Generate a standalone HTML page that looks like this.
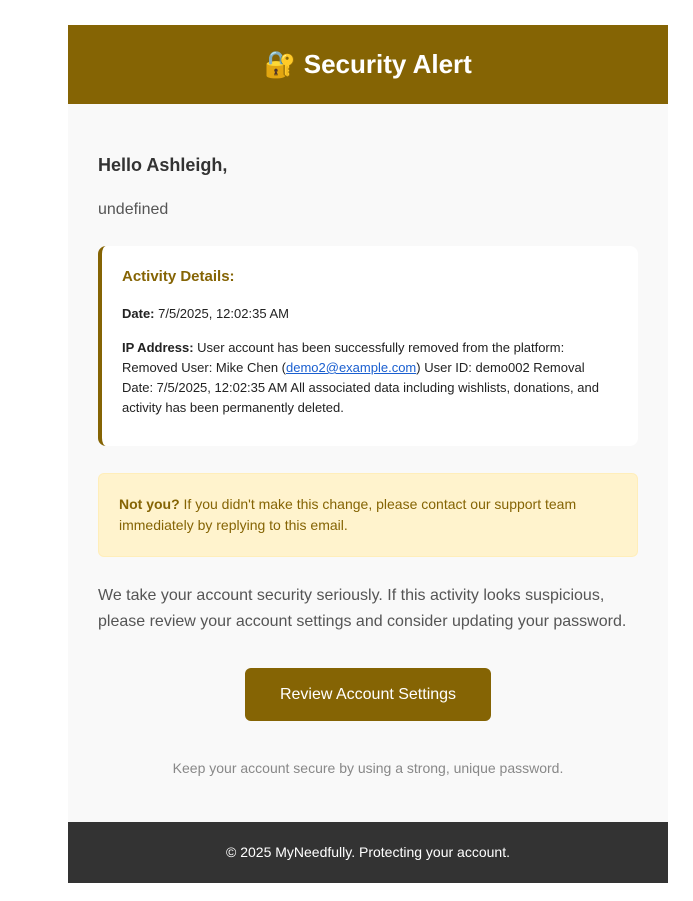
<!DOCTYPE html>
<html><head><meta charset="utf-8"><style>
body{margin:0;background:#fff;font-family:"Liberation Sans",Arial,sans-serif;}
.wrap{position:absolute;left:68px;top:25px;width:600px;background:#f9f9f9;}
.hdr{height:79px;background:#856404;color:#fff;font-size:26px;font-weight:bold;text-align:center;line-height:79px;}
.body{padding:0 30px;position:relative;height:718px;}
.abs{position:absolute;}
h2{margin:0;font-size:18px;color:#333;position:absolute;left:30px;top:51px;}
.und{left:30px;top:97px;font-size:16px;color:#555;}
.act{left:30px;top:142px;height:200px;background:#fff;border-left:4px solid #856404;border-radius:8px;padding:0 20px;box-sizing:border-box;width:540px;}
.act .t{position:absolute;left:20px;top:22px;font-size:15px;font-weight:bold;color:#856404;}
.act .d{position:absolute;left:20px;top:60px;font-size:13px;color:#222;}
.act .ip{position:absolute;left:20px;top:92px;width:482px;font-size:13px;line-height:20px;color:#222;}
a{color:#1a5fd0;}
.warn{left:30px;top:369px;width:540px;height:84px;box-sizing:border-box;background:#fff3cd;border:1px solid #ffeeba;border-radius:6px;padding:20px 20px;font-size:14px;line-height:21px;color:#856404;}
.p{left:30px;top:479px;width:545px;font-size:16px;line-height:26px;color:#555;}
.btn{left:177px;top:564px;width:246px;height:53px;background:#856404;border-radius:6px;color:#fff;font-size:16px;text-align:center;line-height:53px;}
.note{left:0;width:600px;top:656px;text-align:center;font-size:14px;color:#888;}
.ftr{height:61px;background:#333;color:#fff;font-size:14px;text-align:center;line-height:61px;}
</style></head><body>
<div class="wrap">
<div class="hdr">🔐 Security Alert</div>
<div class="body">
<h2>Hello Ashleigh,</h2>
<div class="abs und">undefined</div>
<div class="abs act">
<div class="t">Activity Details:</div>
<div class="d"><b>Date:</b> 7/5/2025, 12:02:35 AM</div>
<div class="ip"><b>IP Address:</b> User account has been successfully removed from the platform: Removed User: Mike Chen (<a href="#">demo2@example.com</a>) User ID: demo002 Removal Date: 7/5/2025, 12:02:35 AM All associated data including wishlists, donations, and activity has been permanently deleted.</div>
</div>
<div class="abs warn"><b>Not you?</b> If you didn't make this change, please contact our support team immediately by replying to this email.</div>
<div class="abs p">We take your account security seriously. If this activity looks suspicious, please review your account settings and consider updating your password.</div>
<div class="abs btn">Review Account Settings</div>
<div class="abs note">Keep your account secure by using a strong, unique password.</div>
</div>
<div class="ftr">© 2025 MyNeedfully. Protecting your account.</div>
</div>
</body></html>
